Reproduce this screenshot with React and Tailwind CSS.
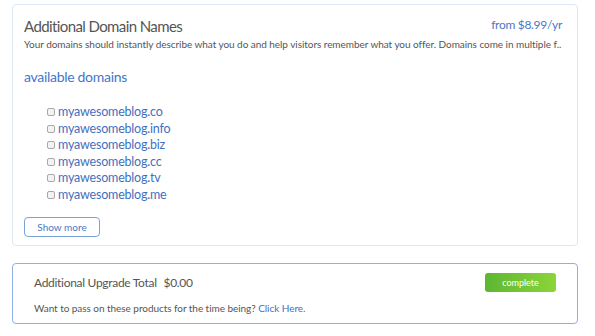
const domains = [
  "myawesomeblog.co",
  "myawesomeblog.info",
  "myawesomeblog.biz",
  "myawesomeblog.cc",
  "myawesomeblog.tv",
  "myawesomeblog.me",
];

export default function App() {
  return (
    <div className="w-[595px] h-[336px] bg-white font-['Lato',sans-serif] pt-[4px] pl-[12px]">
      {/* domains card */}
      <div className="w-[566px] h-[242px] rounded-[4px] border border-[#dde8f4] pl-[11px] pr-[15px] pt-[11px]">
        <div className="flex items-start justify-between">
          <h2 className="text-[15px] leading-[20px] tracking-[-0.6px] text-[#555]">Additional Domain Names</h2>
          <span className="mt-[1px] text-[12px] leading-[16px] tracking-[-0.3px] text-[#4a78c9]">from $8.99/yr</span>
        </div>
        <p className="mt-[1px] whitespace-nowrap text-[10px] leading-[14px] tracking-[-0.05px] text-[#555]">
          Your domains should instantly describe what you do and help visitors remember what you offer. Domains come in multiple f..
        </p>
        <h3 className="mt-[16px] text-[14px] leading-[20px] tracking-[-0.3px] text-[#3f78c8]">available domains</h3>

        <ul className="mt-[17px] pl-[23px]">
          {domains.map((d) => (
            <li key={d} className="flex items-center h-[16.5px]">
              <span className="w-[8px] h-[8px] rounded-[2px] border border-[#a8a8a8] bg-[#f3f3f3] mr-[3px]" />
              <span className="text-[12.5px] leading-[16px] text-[#3f6fc0] tracking-[-0.2px]">{d}</span>
            </li>
          ))}
        </ul>

        <button className="mt-[14px] w-[76px] h-[20px] rounded-[4px] border border-[#7aa3db] text-[10px] text-[#4a78c9] bg-white">
          Show more
        </button>
      </div>

      {/* total card */}
      <div className="mt-[17px] w-[566px] h-[61px] rounded-[4px] border border-[#8fb0e6] pl-[21px] pr-[21px] pt-[9px]">
        <div className="flex items-center justify-between">
          <div className="text-[12px] tracking-[-0.3px] text-[#555] leading-[16px]">
            Additional Upgrade Total <span className="ml-[4px]">$0.00</span>
          </div>
          <button className="w-[71px] h-[19px] rounded-[3px] bg-gradient-to-r from-[#5db632] to-[#8bd53a] text-white text-[9px]">
            complete
          </button>
        </div>
        <p className="mt-[9px] text-[10px] leading-[14px] tracking-[-0.05px] text-[#555]">
          Want to pass on these products for the time being? <span className="text-[#3f6fc0]">Click Here.</span>
        </p>
      </div>
    </div>
  );
}
